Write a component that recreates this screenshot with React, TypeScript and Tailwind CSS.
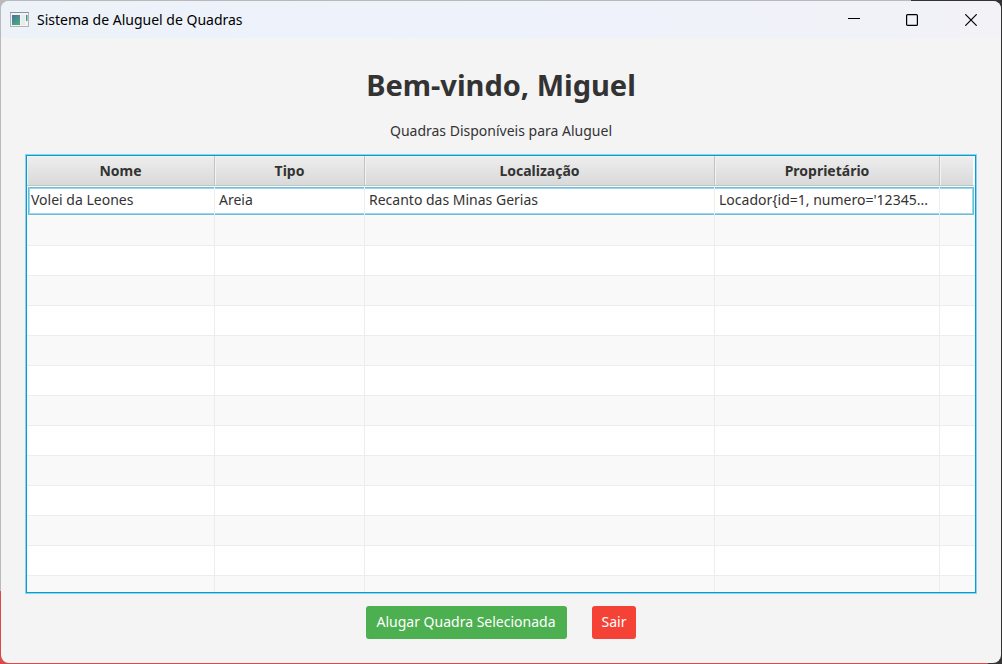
import React from "react";

type Court = { nome: string; tipo: string; local: string; dono: string };

const courts: Court[] = [
  {
    nome: "Volei da Leones",
    tipo: "Areia",
    local: "Recanto das Minas Gerias",
    dono: "Locador{id=1, numero='12345...",
  },
];

const headers = ["Nome", "Tipo", "Localização", "Proprietário", ""];
const fillerRows = Array.from({ length: 40 }, (_, i) => i);

function focusEdge(index: number) {
  if (index === 0) {
    return "border-l pl-[2px] shadow-[inset_1px_1px_0_#9fd6e9,inset_0_-1px_0_#9fd6e9]";
  }
  if (index === headers.length - 1) {
    return "border-r shadow-[inset_-1px_1px_0_#9fd6e9,inset_0_-1px_0_#9fd6e9]";
  }
  return "pl-1 shadow-[inset_0_1px_0_#9fd6e9,inset_0_-1px_0_#9fd6e9]";
}

function AppIcon() {
  return (
    <svg width="19" height="16" viewBox="0 0 19 16" aria-hidden="true">
      <defs>
        <linearGradient id="pane" x1="0" y1="0" x2="0.6" y2="1">
          <stop offset="0" stopColor="#4273a8" />
          <stop offset="1" stopColor="#4fa779" />
        </linearGradient>
      </defs>
      <rect x="0.5" y="0.5" width="18" height="14" fill="#f2f3f4" stroke="#b0b3b8" />
      <path d="M0 0.5h19" stroke="#8f9399" />
      <rect x="2" y="3" width="8" height="10" fill="url(#pane)" />
      <rect x="11" y="3" width="4" height="10" fill="#e8ebed" />
      <rect x="16" y="3" width="1.5" height="6" fill="url(#pane)" />
    </svg>
  );
}

function TitleBar() {
  return (
    <header className="flex h-[37px] shrink-0 items-center bg-linear-to-r from-[#edf2f9] via-[#eef2fb] to-[#f2f2f7] pl-[9px]">
      <AppIcon />
      <span className="ml-2 flex-1 text-sm text-black">Sistema de Aluguel de Quadras</span>
      <button aria-label="Minimizar" className="flex h-full w-[58px] items-center justify-center">
        <svg width="12" height="12" viewBox="0 0 12 12" aria-hidden="true">
          <path d="M0 4.5h12" stroke="#000" />
        </svg>
      </button>
      <button aria-label="Maximizar" className="flex h-full w-[58px] items-center justify-center">
        <svg width="12" height="12" viewBox="0 0 12 12" fill="none" aria-hidden="true">
          <rect x="0.6" y="0.6" width="10.8" height="10.8" rx="1" stroke="#000" strokeWidth="1.2" />
        </svg>
      </button>
      <button aria-label="Fechar" className="flex h-full w-[60px] items-center justify-center">
        <svg width="12" height="12" viewBox="0 0 12 12" aria-hidden="true">
          <path d="M0.3 0.3l11.4 11.4M11.7 0.3L0.3 11.7" stroke="#000" strokeWidth="1.2" />
        </svg>
      </button>
    </header>
  );
}

function CourtTable() {
  return (
    <div className="min-h-0 w-full flex-1 overflow-hidden border border-[#039ed3] bg-white shadow-[0_0_0_1px_#8fd2ea]">
      <table aria-labelledby="lista" className="w-full table-fixed border-separate border-spacing-0">
        <colgroup>
          <col className="w-[188px]" />
          <col className="w-[150px]" />
          <col className="w-[350px]" />
          <col className="w-[225px]" />
          <col />
        </colgroup>
        <thead>
          <tr>
            {headers.map((h, i) => (
              <th
                key={i}
                className="h-[30px] border-r border-b border-[#c3c3c3] bg-linear-to-b from-[#eeeeee] to-[#d9d9d9] p-0 text-center leading-5 font-bold shadow-[inset_1px_1px_0_#f3f3f3] last:border-r-2 last:border-r-white"
              >
                {h}
              </th>
            ))}
          </tr>
        </thead>
        <tbody>
          {courts.map((c) => (
            <tr key={c.nome}>
              {[c.nome, c.tipo, c.local, c.dono, ""].map((v, i) => (
                <td
                  key={i}
                  className="h-[30px] border-r border-[#ededed] bg-white p-0 first:pl-px last:border-r-white"
                >
                  <div
                    className={
                      "h-[28px] overflow-hidden border-y border-[#66bedc] leading-6 whitespace-nowrap " +
                      focusEdge(i)
                    }
                  >
                    {v}
                  </div>
                </td>
              ))}
            </tr>
          ))}
          {fillerRows.map((r) => (
            <tr key={r} className="odd:bg-white even:bg-[#f9f9f9]">
              {headers.map((_, i) => (
                <td key={i} className="h-[30px] border-r border-b border-[#ededed] p-0 last:border-r-0" />
              ))}
            </tr>
          ))}
        </tbody>
      </table>
    </div>
  );
}

export default function App() {
  return (
    <div className="h-screen bg-[linear-gradient(#333,#333),linear-gradient(#333,#333),linear-gradient(#b9b9b9_89%,#d94a4a_89%)] bg-[length:91px_14px,14px_100%,100%_100%] bg-[position:right_top,right_top,left_top] bg-no-repeat p-px font-['Noto_Sans','Open_Sans',sans-serif] text-sm text-[#333]">
      <div className="flex h-full flex-col overflow-hidden rounded-lg bg-[#f4f4f4]">
        <TitleBar />
        <main className="flex min-h-0 flex-1 flex-col items-center px-[25px] pt-[25px] pb-6">
          <h1 className="text-[29px] leading-[44px] font-bold">Bem-vindo, Miguel</h1>
          <p id="lista" className="my-[14px] leading-5">
            Quadras Disponíveis para Aluguel
          </p>
          <CourtTable />
          <div className="mt-[13px] flex shrink-0 gap-[25px]">
            <button className="h-[33px] rounded-[3px] bg-[#4caf50] px-[11px] pb-[2px] text-white">
              Alugar Quadra Selecionada
            </button>
            <button className="h-[33px] rounded-[3px] bg-[#f44336] px-[10px] pb-[2px] text-white">Sair</button>
          </div>
        </main>
      </div>
    </div>
  );
}
